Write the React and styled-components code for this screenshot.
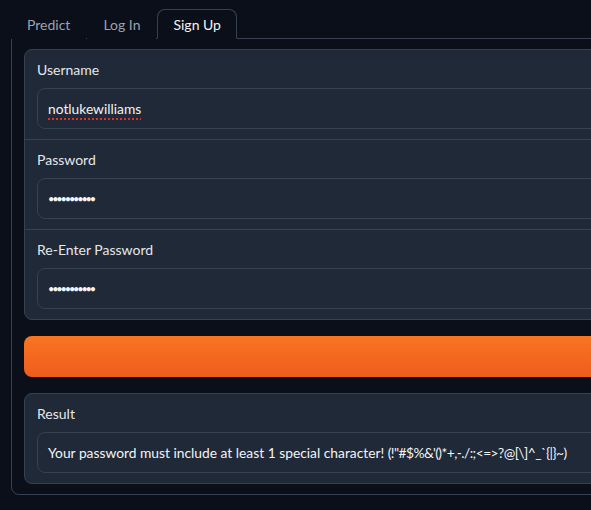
import React from "react";
import styled, { createGlobalStyle } from "styled-components";

const GlobalStyle = createGlobalStyle`
  html, body {
    margin: 0;
    padding: 0;
    background: #0b0f19;
    overflow: hidden;
  }
  body {
    font-family: "Lato", "Noto Sans", sans-serif;
    color: #f3f4f6;
  }
`;

function Field({ label, value, password, spell }) {
  return (
    <FieldBlock>
      <Label>{label}</Label>
      <InputBox>
        <InputText password={password} spell={spell}>
          {value}
        </InputText>
      </InputBox>
    </FieldBlock>
  );
}

function App() {
  return (
    <Page>
      <GlobalStyle />
      <TabBar>
        <Tab>Predict</Tab>
        <Tab>Log In</Tab>
        <Tab selected>Sign Up</Tab>
      </TabBar>
      <Panel>
        <Form>
          <Field label="Username" value="notlukewilliams" spell />
          <Field label="Password" value="•••••••••••" password />
          <Field label="Re-Enter Password" value="•••••••••••" password />
        </Form>
        <PrimaryButton />
        <ResultBlock>
          <Label>Result</Label>
          <InputBox>
            <InputText>
              Your password must include at least 1 special character!{" "}
              <Symbols>(!"#$%&amp;'()*+,-./:;&lt;=&gt;?@[\]^_`{"{|}"}~)</Symbols>
            </InputText>
          </InputBox>
        </ResultBlock>
      </Panel>
    </Page>
  );
}

export default App;

const Page = styled.div`
  padding: 9px 0 0 11px;
  width: 680px;
`;

const TabBar = styled.div`
  display: flex;
  gap: 1px;
  position: relative;
  z-index: 1;
  margin-bottom: -1px;
`;

const Tab = styled.button`
  font-family: inherit;
  font-size: 14px;
  height: 30px;
  padding: 0 15px;
  background: #0b0f19;
  color: ${(p) => (p.selected ? "#f3f4f6" : "#9ca3af")};
  border: 1px solid ${(p) => (p.selected ? "#374151" : "transparent")};
  border-bottom-color: ${(p) => (p.selected ? "#0b0f19" : "transparent")};
  border-radius: 8px 8px 0 0;
  cursor: pointer;
`;

const Panel = styled.div`
  border: 1px solid #374151;
  border-radius: 0 8px 8px 8px;
  padding: 10px 12px;
  display: flex;
  flex-direction: column;
  gap: 16px;
`;

const Form = styled.div`
  display: flex;
  flex-direction: column;
  gap: 1px;
  background: #374151;
  border: 1px solid #374151;
  border-radius: 8px;
  overflow: hidden;
`;

const FieldBlock = styled.div`
  background: #1f2937;
  padding: 10px 12px;
`;

const Label = styled.div`
  font-size: 14px;
  line-height: 20px;
  color: #e5e7eb;
  margin-bottom: 8px;
`;

const InputBox = styled.div`
  border: 1px solid #374151;
  border-radius: 8px;
  background: #1f2937;
  padding: 10px;
  height: 19px;
  display: flex;
  align-items: center;
`;

const InputText = styled.span`
  font-size: ${(p) => (p.password ? "11px" : "13.8px")};
  letter-spacing: ${(p) => (p.password ? "-2.2px" : "0")};
  line-height: 19px;
  color: #f3f4f6;
  white-space: nowrap;
  text-decoration: ${(p) => (p.spell ? "underline dotted #e03131 2px" : "none")};
  text-underline-offset: 4px;
`;

const Symbols = styled.span`
  letter-spacing: -0.55px;
`;

const PrimaryButton = styled.button`
  height: 41px;
  border: none;
  border-radius: 8px;
  background: linear-gradient(to bottom, #f97522, #ee5c1d);
`;

const ResultBlock = styled.div`
  background: #1f2937;
  border: 1px solid #374151;
  border-radius: 8px;
  padding: 10px 12px;
`;
